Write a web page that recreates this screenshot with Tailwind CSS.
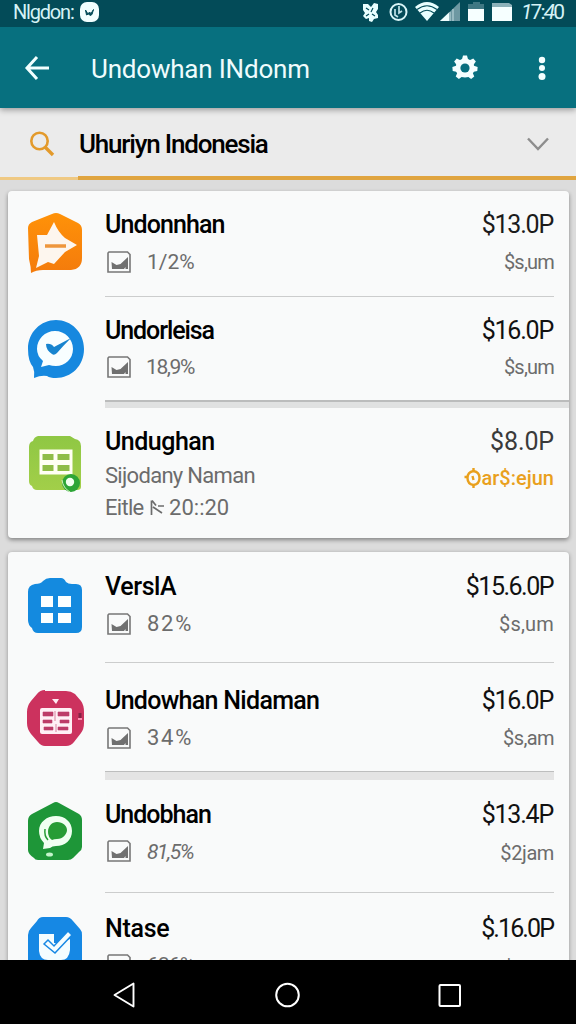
<!DOCTYPE html>
<html lang="id">
<head>
<meta charset="utf-8">
<title>Undowhan</title>
<script src="https://cdn.jsdelivr.net/npm/@tailwindcss/browser@4"></script>
</head>
<body class="w-[576px] h-[1024px] overflow-hidden flex flex-col bg-[#dedede] font-[Roboto,sans-serif] text-black">
<svg width="0" height="0" class="hidden">
  <symbol id="thumb" viewBox="0 0 24 22"><path d="M2 1h18.500l2.500 2.500v17.500h-22v-19z" fill="none" stroke="#777" stroke-width="1.600"/><path d="M4.500 11l5 3 4-1 7.500-7v12h-2.500v-2l-1.500 2h-12z" fill="#707070"/></symbol>
</svg>

<header class="shrink-0 relative z-10 shadow-[0_2px_6px_rgba(0,0,0,0.35)]">
  <div class="h-[27px] bg-[#034b58] flex items-center text-[#d5f2f6]">
    <span class="ml-[13px] -mt-[3px] text-[20px] leading-[24px] w-[67px] tracking-[-1.200px] whitespace-nowrap">Nlgdon:</span>
    <svg class="-mt-[4px]" width="19" height="20" viewBox="0 0 19 20"><rect width="19" height="20" rx="7" fill="#f2ffff"/><path d="M5.500 8l2.500 4 1.500-2 1.500 1.500 2.500-4-1.500 5-2 1-1.500-1.500-2 1z" fill="#034b58" stroke="#034b58"/></svg>
    <svg class="ml-auto -mt-[2px]" width="154" height="25" viewBox="360 0 154 25">
      <path d="M363 4h5l3 3 3-4 4 1v5l-2 3 2 3v3l-4 1-2 3-3-1v-3l-3 1-3-3 2-3-2-3z" fill="#e9ffff"/><path d="M366 8l3 2m4-2l-2 4m-5 4l3-2m3 0l3 2" fill="none" stroke="#034b58" stroke-width="1.200"/>
      <circle cx="398.500" cy="12" r="8" fill="none" stroke="#d9f5f7" stroke-width="2"/><path d="M399 6v7l3-2M395 9v6l3 2" fill="none" stroke="#bfe2e7" stroke-width="1.700"/>
      <path d="M415 7Q427-3 439 7L427 21z" fill="#e9ffff"/><path d="M417 9.500q10-7.500 20 0M420 13q7-5.500 14 0" fill="none" stroke="#034b58" stroke-width="1.100"/>
      <path d="M440 21L460 2v19z" fill="#6d98a2"/><path d="M440 21l9-8.500v8.500z" fill="#effefe"/><path d="M450 12v9m3-12v12" stroke="#c4dde2"/>
      <path d="M468 9V4h5V2h7v2h4v5z" fill="#3f7883"/><path d="M468 9h16v12h-16z" fill="#f6ffff"/>
      <path d="M492 3h17l3 2v3h-20z" fill="#8db2ba"/><path d="M492 7h20v14h-20z" fill="#f6ffff"/>
    </svg>
    <span class="ml-[7px] -mt-[3px] w-[55px] text-[21px] leading-[24px] tracking-[-1.900px]"><i>1</i>7:<i>4</i>0</span>
  </div>
  <div class="h-[81px] bg-[#07707f] flex items-center text-white">
    <svg class="ml-[24px] shrink-0" width="28" height="28" viewBox="24 54 28 28"><path d="M49 68H28M37 57L27 68l10 11" fill="none" stroke="#f2ffff" stroke-width="3"/></svg>
    <h1 class="ml-[39px] mt-[2px] text-[26px] leading-[32px] tracking-[-0.200px] whitespace-nowrap text-[#effcfd]">Undowhan INdonm</h1>
    <svg class="ml-auto" width="28" height="28" viewBox="-14 -14 28 28"><g fill="#f4ffff"><circle r="9.500"/><path id="tooth" d="M-3.200-8L-2-12.500H2L3.200-8z"/><use href="#tooth" transform="rotate(50)"/><use href="#tooth" transform="rotate(95)"/><use href="#tooth" transform="rotate(142)"/><use href="#tooth" transform="rotate(218)"/><use href="#tooth" transform="rotate(265)"/><use href="#tooth" transform="rotate(310)"/></g><circle r="4.600" fill="#07707f"/></svg>
    <svg class="ml-[57px] mr-[28px]" width="12" height="28" viewBox="0 0 12 28" fill="#f4ffff"><circle cx="6" cy="6" r="3.200"/><circle cx="6" cy="14" r="3"/><circle cx="6" cy="22.500" r="3.500"/></svg>
  </div>
</header>

<section class="shrink-0 h-[72px] bg-[#ebebeb] flex flex-col shadow-[0_1px_3px_rgba(0,0,0,0.35)]">
  <div class="flex-1 flex items-center pt-[4px]">
    <svg class="ml-[28px] shrink-0" width="28" height="28" viewBox="28 130 28 28" fill="none" stroke="#e39a2b"><circle cx="39.500" cy="141" r="8.200" stroke-width="2.600"/><path d="M45 147l8 8" stroke-width="3.400"/></svg>
    <span class="ml-[23px] text-[26px] leading-[32px] font-medium tracking-[-1.200px] whitespace-nowrap">Uhuriyn Indonesia</span>
    <svg class="ml-auto mr-[26px]" width="24" height="16" viewBox="0 0 24 16"><path d="M2 2.500l10 10.500 10-10.500" fill="none" stroke="#8d8d8d" stroke-width="2.400"/></svg>
  </div>
  <div class="flex items-end h-[4px]"><div class="w-[78px] h-[3px] bg-[#efc983]"></div><div class="flex-1 h-[4px] bg-[#e0a540]"></div></div>
</section>

<main class="flex-1 min-h-0 overflow-hidden pt-[11px] pl-[8px] pr-[7px] bg-[#dcdcdc]">
  <div class="bg-[#f9fafa] rounded-[4px] shadow-[0_2px_4px_rgba(0,0,0,0.4)] h-[347px]">
    <div class="h-[105px] pt-[20px] pl-[18px] pr-[15px] flex">
      <svg class="shrink-0" width="60" height="64" viewBox="26 211 60 64"><defs><linearGradient id="or" x2="0" y2="1"><stop stop-color="#ff9208"/><stop offset="1" stop-color="#f47b0c"/></linearGradient></defs><path d="M52 214q4-2 8 0l18 9q4 2 4 7v28q0 11-11 12H43q-7 0-12 3 0-6-2-14l-1-31q0-4 4-6z" fill="url(#or)"/><path d="M37 235l10 0 7-13q4 10 11 16l12 7-12 7-11 12-6-2-12 6 3-12z" fill="#fdf6ee"/><path d="M45 246h21" stroke="#ee963c" stroke-width="3.500"/></svg>
      <div class="ml-[19px] flex-1">
        <div class="text-[25px] leading-[28px] font-medium tracking-[-0.900px]">Undonnhan</div>
        <div class="mt-[11px] flex items-center text-[#6c6c6c] text-[21px] leading-[24px]"><svg class="ml-[2px] mr-[16px]" width="24" height="22"><use href="#thumb"/></svg><span class="tracking-[0px]">1/2%</span></div>
      </div>
      <div class="text-right"><div class="text-[25px] leading-[28px] text-[#1b1b1b] tracking-[-1.200px] mr-[1px]">$13.0P</div><div class="mt-[11px] text-[20px] leading-[24px] text-[#6c6c6c] tracking-[-0.800px]">$s,um</div></div>
    </div>
    <div class="ml-[97px] mr-[15px] h-px bg-[#cccdcd]"></div>
    <div class="h-[103px] pt-[20px] pl-[18px] pr-[15px] flex">
      <svg class="shrink-0" width="60" height="64" viewBox="26 317 60 64"><path d="M56 320c15 0 28 12 28 29s-13 29-28 29q-6 0-9-2-6-1-13 2 1-6-1-11-5-6-5-18c0-17 13-29 28-29z" fill="#1688df"/><path d="M55 331c10 0 18 8 18 18s-8 17-17 17q-4 0-7-1l-8 2 2-6q-6-5-6-12c0-10 8-18 18-18z" fill="#f8feff"/><path d="M46 344q5-1 8 3l17-9q-8 8-14 15-3 3-5 1-6-4-6-10z" fill="#1784cf"/></svg>
      <div class="ml-[19px] flex-1">
        <div class="text-[25px] leading-[28px] font-medium tracking-[-1.100px]">Undorleisa</div>
        <div class="mt-[10px] flex items-center text-[#6c6c6c] text-[21px] leading-[24px]"><svg class="ml-[2px] mr-[15px]" width="24" height="22"><use href="#thumb"/></svg><span class="tracking-[-1.400px]">18,9%</span></div>
      </div>
      <div class="text-right"><div class="text-[25px] leading-[28px] text-[#111] tracking-[-1.200px] mr-[1px]">$16.0P</div><div class="mt-[10px] text-[20px] leading-[24px] text-[#6c6c6c] tracking-[-0.800px]">$s,um</div></div>
    </div>
    <div class="ml-[97px] h-[8px] bg-[#e0e1e1] border-t-2 border-[#bbbcbc]"></div>
    <div class="h-[130px] pt-[20px] pl-[18px] pr-[15px] flex">
      <svg class="shrink-0" width="60" height="68" viewBox="26 428 60 68"><defs><linearGradient id="gr" x2="0" y2="1"><stop stop-color="#8fc744"/><stop offset="1" stop-color="#a2cf49"/></linearGradient></defs><path d="M38 436h32l5 3q6 1 6 7v41q0 3-4 3H37q-4 0-5-4-3-1-3-5v-34q0-5 4-6 1-4 5-5z" fill="url(#gr)"/><path d="M39.500 449.500h33v25h-33z" fill="#fffff4"/><path d="M42.500 454h11v6h-11zm15 0h12v6h-12zm-15 11h11v6h-11zm15 0h12v6h-12z" fill="#8fbd47"/><circle cx="71" cy="483" r="9" fill="#2da536"/><circle cx="70" cy="482" r="4.200" fill="#f1fff0"/><path d="M62 480q1 8 8 12" fill="none" stroke="#d5efbe"/></svg>
      <div class="ml-[19px] flex-1">
        <div class="text-[25px] leading-[28px] font-medium tracking-[-0.500px]">Undughan</div>
        <div class="mt-[4px] text-[#6c6c6c] text-[22px] leading-[32px] tracking-[-0.700px] whitespace-nowrap">Sijodany Naman<br>Eitle <svg class="inline-block align-baseline ml-[2px]" width="14" height="16" viewBox="0 0 14 16" fill="none" stroke="#6c6c6c" stroke-width="1.700"><path d="M1.500 16V1.500M2 1.500l4 5M3 8l9 6M8 7h6"/></svg> <span class="tracking-[0px]">20::20</span></div>
      </div>
      <div class="text-right"><div class="text-[25px] leading-[28px] text-[#3a3a3a] tracking-[-0.100px]">$8.0P</div><div class="mt-[10px] text-[20px] leading-[24px] font-medium text-[#e9a01d] tracking-[0px] flex items-center justify-end"><svg width="18" height="20" viewBox="0 0 17 20" fill="none" stroke="#e9a01d" stroke-width="2.400"><path d="M9 0v3M0 9h3M9 17v3M8 8l1 4"/><path d="M9 3q6 1 6 7t-6 7q-6-1-6-7t6-7z"/></svg>ar$:ejun</div></div>
    </div>
  </div>

  <div class="mt-[14px] bg-[#f9fafa] rounded-t-[4px] shadow-[0_1px_4px_rgba(0,0,0,0.35)] h-[430px]">
    <div class="h-[110px] pt-[21px] pl-[18px] pr-[15px] flex">
      <svg class="shrink-0" width="60" height="64" viewBox="26 573 60 64"><path d="M50 578h11q3 0 5 4 2 2 6 2h4q6 0 6 6v37q0 6-6 6H38q-5 0-6-5-4-3-4-8v-28q0-7 7-8 6 0 8-3 3-3 7-3z" fill="#148adf"/><path d="M41 596h12v11H41zm17 0h13v11H58zM41 613h12v10H41zm17 0h13v10H58z" fill="#fbffff"/></svg>
      <div class="ml-[19px] flex-1">
        <div class="text-[25px] leading-[28px] font-medium tracking-[-0.400px]">VerslA</div>
        <div class="mt-[11px] flex items-center text-[#6c6c6c] text-[21px] leading-[24px]"><svg class="ml-[2px] mr-[16px]" width="24" height="22"><use href="#thumb"/></svg><span class="text-[22px] tracking-[1.700px]">82%</span></div>
      </div>
      <div class="text-right"><div class="text-[25px] leading-[28px] text-[#111] tracking-[-1.500px] mr-[1px]">$15.6.0P</div><div class="mt-[11px] text-[20px] leading-[24px] text-[#6c6c6c] tracking-[0.200px]">$s,um</div></div>
    </div>
    <div class="ml-[97px] mr-[15px] h-px bg-[#cccdcd]"></div>
    <div class="h-[108px] pt-[23px] pl-[18px] pr-[15px] flex">
      <svg class="shrink-0" width="60" height="64" viewBox="26 686 60 64"><path d="M45 691h21q5 0 9 3l6 7q3 4 3 11v11q0 6-3 10l-7 9q-3 4-8 4H45q-4 0-7-4l-7-8q-4-5-4-11v-11q0-6 4-11l6-7q3-4 8-4z" fill="#cc325e"/><path d="M52 699h7l-3 5z" fill="#ffeaf2"/><rect x="40" y="708" width="32" height="26" rx="2" fill="#fff0f5"/><path d="M43 712h10v4H43zm15 0h11v4H58zM43 720h9v3h-9zm17 0h9v3h-9zM44 727h9v3h-9zm14 0h10v3H58zM55 711v10m1 3v8" fill="#bd3c68" stroke="#bd3c68" stroke-width=".6"/><path d="M80 713v7" stroke="#842345" stroke-width="3"/><path d="M78 719h4" stroke="#ff8aae" stroke-width="2"/></svg>
      <div class="ml-[19px] flex-1">
        <div class="mt-px text-[25px] leading-[28px] font-medium tracking-[-0.700px] whitespace-nowrap">Undowhan Nidaman</div>
        <div class="mt-[11px] flex items-center text-[#6c6c6c] text-[21px] leading-[24px]"><svg class="ml-[2px] mr-[16px]" width="24" height="22"><use href="#thumb"/></svg><span class="text-[22px] tracking-[1.700px]">34%</span></div>
      </div>
      <div class="text-right"><div class="mt-px text-[25px] leading-[28px] text-[#111] tracking-[-1.200px] mr-[1px]">$16.0P</div><div class="mt-[11px] text-[20px] leading-[24px] text-[#6c6c6c] tracking-[-0.600px]">$s,am</div></div>
    </div>
    <div class="ml-[97px] mr-[15px] h-[9px] bg-[#e4e4e4] border-t border-[#bdbebe]"></div>
    <div class="h-[112px] pt-[20px] pl-[18px] pr-[15px] flex">
      <svg class="shrink-0" width="60" height="64" viewBox="26 800 60 64"><path d="M53 803q3-2 6 0l20 11q3 2 3 6v27q0 3-3 5l-6 6q-2 2-5 2H38q-3 0-4-2-6-4-6-8v-29q0-5 4-7z" fill="#1e9638"/><path d="M56 816c9 0 16 6 16 15s-7 15-16 15q-4 0-6 2l-7 1 1-6q-5-5-5-12c0-9 8-15 17-15z" fill="#f0fff1"/><path d="M57 822c6 0 10 4 10 8s-4 9-10 9q-3 0-5 1-4-3-4-8c0-6 4-10 9-10z" fill="#279c35"/><path d="M45 829q-1 7 3 11" fill="none" stroke="#279c35" stroke-width="1.500"/><ellipse cx="49.500" cy="854.500" rx="3.500" ry="2" fill="#c4f5cb"/></svg>
      <div class="ml-[19px] flex-1">
        <div class="mt-px text-[25px] leading-[28px] font-medium tracking-[-1px]">Undobhan</div>
        <div class="mt-[9px] flex items-center text-[#6c6c6c] text-[21px] leading-[24px]"><svg class="ml-[2px] mr-[16px]" width="24" height="22"><use href="#thumb"/></svg><span class="tracking-[-1.400px] italic mt-[2px]">81,5%</span></div>
      </div>
      <div class="text-right"><div class="mt-px text-[25px] leading-[28px] text-[#111] tracking-[-1.200px] mr-[1px]">$13.4P</div><div class="mt-[12px] text-[20px] leading-[24px] text-[#6c6c6c] tracking-[-0.400px]">$2jam</div></div>
    </div>
    <div class="ml-[97px] mr-[15px] h-px bg-[#cccdcd]"></div>
    <div class="h-[89px] pt-[21px] pl-[18px] pr-[15px] flex">
      <svg class="shrink-0" width="60" height="64" viewBox="26 914 60 64"><path d="M43 917h23q4 0 7 4l7 8q2 2 2 6v43H28v-43q0-4 3-7l6-7q2-4 6-4z" fill="#1688e4"/><path d="M39 934h15v9h7l9-4v11q-1 10-9 10H48q-8 0-9-9z" fill="#f4fdff"/><path d="M44 944l4-4 6 6 14-15 4 4-17 18z" fill="#f4fdff" stroke="#1688e4" stroke-width="1.500"/></svg>
      <div class="ml-[19px] flex-1">
        <div class="mt-px text-[25px] leading-[28px] font-medium tracking-[-0.300px]">Ntase</div>
        <div class="mt-[10px] flex items-center text-[#6c6c6c] text-[21px] leading-[24px]"><svg class="ml-[2px] mr-[16px]" width="24" height="22"><use href="#thumb"/></svg><span class="tracking-[-0.900px]">636%</span></div>
      </div>
      <div class="text-right"><div class="mt-px text-[25px] leading-[28px] text-[#111] tracking-[-1.900px] mr-[1px]">$.16.0P</div><div class="mt-[13px] text-[20px] leading-[24px] text-[#6c6c6c] tracking-[-0.600px]">$s,um</div></div>
    </div>
  </div>
</main>

<nav class="relative z-10 shrink-0 h-[64px] bg-black flex items-center pt-[5px]">
  <svg class="ml-[110px]" width="28" height="28" viewBox="110 980 28 28"><path d="M133.500 982.500v23L114.500 994z" fill="none" stroke="#fff" stroke-width="1.900" stroke-linejoin="round"/></svg>
  <svg class="ml-[136px]" width="28" height="28" viewBox="274 980 28 28"><circle cx="287.500" cy="994" r="11.300" fill="none" stroke="#fff" stroke-width="2"/></svg>
  <svg class="ml-[134px]" width="28" height="28" viewBox="436 980 28 28"><rect x="439.500" y="984" width="20.500" height="21" rx="1" fill="none" stroke="#fff" stroke-width="2"/></svg>
</nav>
</body>
</html>
